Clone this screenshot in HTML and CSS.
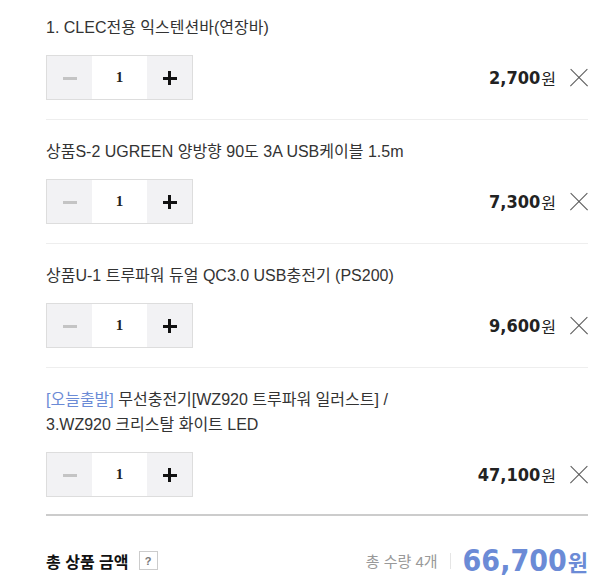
FILE: index.html
```html
<!DOCTYPE html>
<html lang="ko">

<head>
    <meta charset="UTF-8">
    <meta name="viewport" content="width=device-width, initial-scale=1.0">
    <title>장바구니</title>
    <link rel="stylesheet" href="styles.css">
</head>

<body>
    <div class="cart">
        <ul class="cart-list">
            <li class="cart-item">
                <p class="item-name">1. CLEC전용 익스텐션바(연장바)</p>
                <div class="item-row">
                    <div class="qty">
                        <button class="qty-btn minus" type="button"><span></span></button>
                        <input class="qty-input" type="text" value="1">
                        <button class="qty-btn plus" type="button"><span></span></button>
                    </div>
                    <div class="item-price">
                        <strong>2,700</strong><span class="won">원</span>
                        <button class="remove" type="button"></button>
                    </div>
                </div>
            </li>
            <li class="cart-item">
                <p class="item-name">상품S-2 UGREEN 양방향 90도 3A USB케이블 1.5m</p>
                <div class="item-row">
                    <div class="qty">
                        <button class="qty-btn minus" type="button"><span></span></button>
                        <input class="qty-input" type="text" value="1">
                        <button class="qty-btn plus" type="button"><span></span></button>
                    </div>
                    <div class="item-price">
                        <strong>7,300</strong><span class="won">원</span>
                        <button class="remove" type="button"></button>
                    </div>
                </div>
            </li>
            <li class="cart-item">
                <p class="item-name">상품U-1 트루파워 듀얼 QC3.0 USB충전기 (PS200)</p>
                <div class="item-row">
                    <div class="qty">
                        <button class="qty-btn minus" type="button"><span></span></button>
                        <input class="qty-input" type="text" value="1">
                        <button class="qty-btn plus" type="button"><span></span></button>
                    </div>
                    <div class="item-price">
                        <strong>9,600</strong><span class="won">원</span>
                        <button class="remove" type="button"></button>
                    </div>
                </div>
            </li>
            <li class="cart-item">
                <p class="item-name"><span class="tag">[오늘출발]</span> 무선충전기[WZ920 트루파워 일러스트] /<br>3.WZ920 크리스탈 화이트 LED</p>
                <div class="item-row">
                    <div class="qty">
                        <button class="qty-btn minus" type="button"><span></span></button>
                        <input class="qty-input" type="text" value="1">
                        <button class="qty-btn plus" type="button"><span></span></button>
                    </div>
                    <div class="item-price">
                        <strong>47,100</strong><span class="won">원</span>
                        <button class="remove" type="button"></button>
                    </div>
                </div>
            </li>
        </ul>

        <div class="cart-total">
            <div class="total-label">
                총 상품 금액 <span class="help">?</span>
            </div>
            <div class="total-sum">
                <span class="total-count">총 수량 4개</span>
                <span class="divider"></span>
                <strong class="total-price">66,700<span class="won">원</span></strong>
            </div>
        </div>
    </div>
</body>

</html>
```

FILE: styles.css
```css
body {
    margin: 0;
    background-color: #fff;
    font-family: "Liberation Sans", "Noto Sans CJK KR", sans-serif;
    color: #333;
}

.cart {
    padding: 0 20px 0 46px;
}

.cart-list {
    list-style: none;
    margin: 0;
    padding: 0;
}

.cart-item {
    padding: 19px 0;
    border-bottom: 1px solid #eee;
}

.cart-item:first-child {
    padding-top: 15px;
}

.cart-item:last-child {
    padding-bottom: 17px;
    border-bottom: none;
}

.item-name {
    margin: 0 0 15px;
    font-size: 16px;
    line-height: 25px;
    color: #333;
}

.tag {
    color: #6b8bd6;
}

.item-row {
    display: flex;
    justify-content: space-between;
    align-items: center;
}

/* quantity stepper */
.qty {
    display: flex;
    height: 43px;
    border: 1px solid #ddd;
}

.qty-btn {
    position: relative;
    width: 45px;
    height: 43px;
    padding: 0;
    border: none;
    background-color: #f2f2f4;
    cursor: pointer;
}

.qty-btn span {
    position: absolute;
    left: 50%;
    top: 50%;
}

.minus span {
    width: 14px;
    height: 3px;
    margin: -1px 0 0 -7px;
    background-color: #c4c4c4;
}

.plus span,
.plus span::after {
    background-color: #111;
}

.plus span {
    width: 14px;
    height: 3px;
    margin: -1px 0 0 -7px;
}

.plus span::after {
    content: "";
    position: absolute;
    left: 5.5px;
    top: -5.5px;
    width: 3px;
    height: 14px;
}

.qty-input {
    width: 55px;
    height: 43px;
    padding: 0;
    border: none;
    text-align: center;
    font-family: "Liberation Serif", serif;
    font-size: 15px;
    font-weight: bold;
    color: #222;
    outline: none;
}

/* price + remove */
.item-price {
    display: flex;
    align-items: center;
    color: #222;
}

.item-price strong {
    font-family: "DejaVu Sans Condensed", "DejaVu Sans", sans-serif;
    font-size: 18px;
    font-weight: bold;
}

.won {
    font-family: "Noto Sans CJK KR", sans-serif;
    font-size: 16px;
    font-weight: normal;
    margin-left: 1px;
}

.remove {
    position: relative;
    width: 18px;
    height: 18px;
    margin-left: 14px;
    padding: 0;
    border: none;
    background: none;
    cursor: pointer;
}

.remove::before,
.remove::after {
    content: "";
    position: absolute;
    left: -3px;
    top: 8px;
    width: 24px;
    height: 1.4px;
    background-color: #555;
}

.remove::before {
    transform: rotate(45deg);
}

.remove::after {
    transform: rotate(-45deg);
}

/* total */
.cart-total {
    display: flex;
    justify-content: space-between;
    align-items: center;
    border-top: 2px solid #ccc;
    padding-top: 27px;
}

.total-label {
    display: flex;
    align-items: center;
    font-family: "Noto Sans CJK KR", sans-serif;
    font-size: 16px;
    font-weight: bold;
    color: #111;
}

.help {
    display: inline-flex;
    align-items: center;
    justify-content: center;
    width: 17px;
    height: 17px;
    margin-left: 10px;
    border: 1px solid #ccc;
    font-family: "Liberation Sans", sans-serif;
    font-size: 11px;
    color: #777;
}

.total-sum {
    display: flex;
    align-items: center;
}

.total-count {
    font-size: 15px;
    color: #999;
}

.divider {
    width: 1px;
    height: 16px;
    margin: 0 12px;
    background-color: #e5e5e5;
}

.total-price {
    font-family: "DejaVu Sans Condensed", "DejaVu Sans", sans-serif;
    font-size: 30px;
    font-weight: bold;
    color: #6b8bd6;
}

.total-price .won {
    font-size: 22px;
    font-weight: bold;
}
```
